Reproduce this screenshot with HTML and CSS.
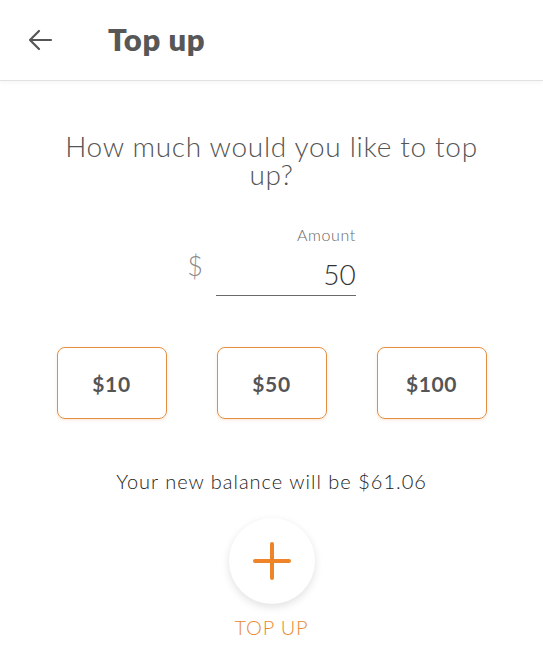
FILE: index.html
```html
<html lang="en">
    <head>
        <meta charset="UTF-8">
        <meta name="viewport" content="width=device-width, initial-scale=1.0">
        <title>Top up</title>

        <link rel="stylesheet" href="styles.css">
    </head>
    <body>

        <header class="topbar">
            <button class="back" aria-label="Back">
                <svg width="26" height="22" viewBox="0 0 26 22">
                    <path d="M24 11H3M12 2L3 11l9 9" fill="none" stroke="#555" stroke-width="2.2" stroke-linecap="round" stroke-linejoin="round"/>
                </svg>
            </button>
            <h1 class="title">Top up</h1>
        </header>

        <main class="content">
            <h2 class="question">How much would you like to top up?</h2>

            <div class="amount">
                <span class="currency">$</span>
                <label class="field">
                    <span class="field-label">Amount</span>
                    <input class="field-input" type="text" value="50">
                </label>
            </div>

            <div class="presets">
                <button class="preset">$10</button>
                <button class="preset">$50</button>
                <button class="preset">$100</button>
            </div>

            <p class="balance">Your new balance will be $61.06</p>

            <div class="action">
                <button class="fab" aria-label="Top up">
                    <svg width="40" height="40" viewBox="0 0 40 40">
                        <path d="M20 3v34M3 20h34" stroke="#ee8427" stroke-width="4" stroke-linecap="round"/>
                    </svg>
                </button>
                <span class="action-label">TOP UP</span>
            </div>
        </main>

    </body>
</html>
```

FILE: styles.css
```css
html, body{
    padding: 0;
    margin: 0;
    background: #fff;
    font-family: Lato, 'Noto Sans', sans-serif;
    color: #555;
}

h1,h2,h3,p{
    margin: 0;
}

button{
    font-family: inherit;
    background: none;
    border: 0;
    padding: 0;
    cursor: pointer;
}

.topbar{
    height: 80px;
    display: flex;
    align-items: center;
    border-bottom: 1px solid #e2e2e2;
    box-shadow: 0 2px 4px rgba(0, 0, 0, 0.04);
}

.back{
    width: 28px;
    height: 24px;
    margin-left: 27px;
    display: flex;
    align-items: center;
}

.title{
    margin-left: 53px;
    font-size: 31px;
    font-weight: 800;
    color: #575757;
    letter-spacing: 0.6px;
    padding-bottom: 2px;
}

.content{
    display: flex;
    flex-direction: column;
    align-items: center;
}

.question{
    width: 430px;
    margin-top: 51px;
    text-align: center;
    font-size: 28px;
    line-height: 28px;
    font-weight: 300;
    color: #555;
    letter-spacing: 0.7px;
}

.amount{
    display: flex;
    align-items: flex-end;
    margin-top: 37px;
}

.currency{
    font-size: 27px;
    font-weight: 300;
    color: #8a8a8a;
    margin-right: 13px;
    padding-bottom: 14px;
}

.field{
    display: flex;
    flex-direction: column;
    align-items: flex-end;
    width: 140px;
}

.field-label{
    font-size: 16px;
    font-weight: 300;
    color: #666;
    letter-spacing: 0.6px;
}

.field-input{
    width: 100%;
    box-sizing: border-box;
    margin-top: 13px;
    border: 0;
    border-bottom: 1.5px solid #6a6a6a;
    outline: none;
    text-align: right;
    font-family: inherit;
    font-size: 28px;
    font-weight: 300;
    color: #333;
    padding: 0 0 4px;
}

.presets{
    display: flex;
    gap: 50px;
    margin-top: 51px;
}

.preset{
    width: 110px;
    height: 72px;
    box-sizing: border-box;
    border: 1.5px solid #e58f43;
    border-radius: 8px;
    box-shadow: 0 1px 3px rgba(229, 143, 67, 0.25);
    font-size: 21px;
    font-weight: 700;
    color: #555;
    letter-spacing: 0.6px;
}

.balance{
    margin-top: 50px;
    font-size: 20px;
    font-weight: 300;
    color: #222;
    letter-spacing: 1px;
}

.action{
    display: flex;
    flex-direction: column;
    align-items: center;
    margin-top: 25px;
}

.fab{
    width: 86px;
    height: 86px;
    border-radius: 50%;
    background: #fff;
    box-shadow: 0 3px 8px rgba(0, 0, 0, 0.12);
    display: flex;
    align-items: center;
    justify-content: center;
}

.action-label{
    margin-top: 11px;
    font-size: 20px;
    font-weight: 300;
    color: #e88a30;
    letter-spacing: 0.8px;
}
```
